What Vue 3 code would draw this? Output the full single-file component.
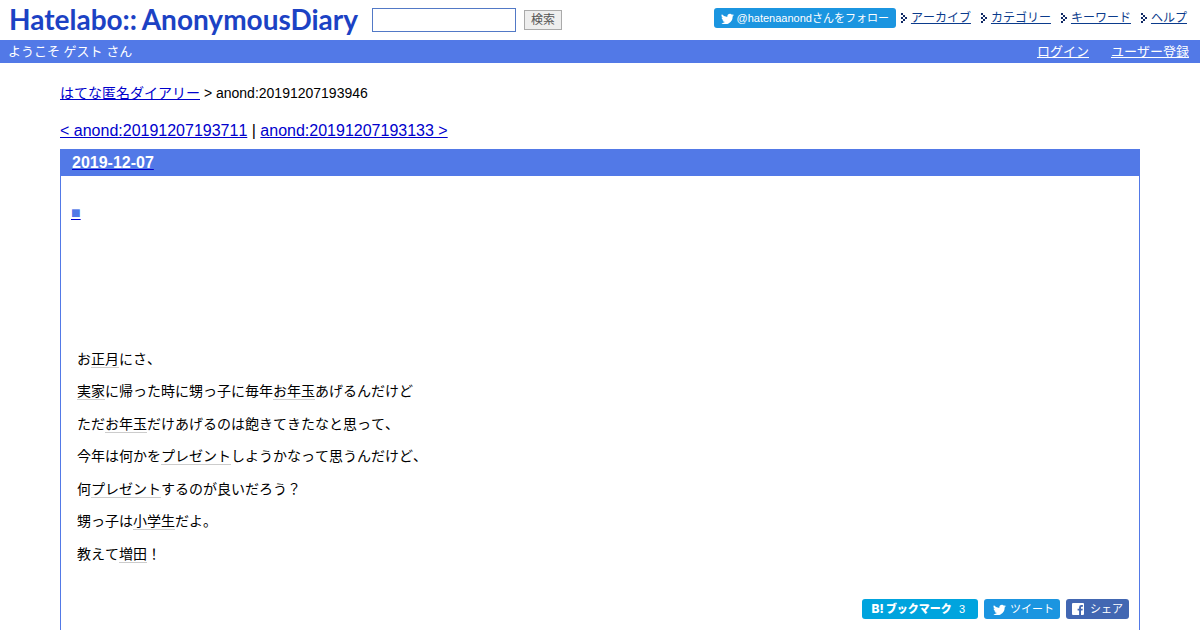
<script setup>
const menu = ['アーカイブ', 'カテゴリー', 'キーワード', 'ヘルプ']
const bird = 'M24 4.6a10 10 0 0 1-2.8.8 5 5 0 0 0 2.1-2.7 10 10 0 0 1-3.1 1.2 4.9 4.9 0 0 0-8.4 4.5A14 14 0 0 1 1.7 3.2a4.9 4.9 0 0 0 1.5 6.5 4.9 4.9 0 0 1-2.2-.6 4.9 4.9 0 0 0 3.9 4.9 5 5 0 0 1-2.2.1 4.9 4.9 0 0 0 4.6 3.4A9.9 9.9 0 0 1 0 19.5 14 14 0 0 0 21.5 7.1 10 10 0 0 0 24 4.6z'
const lines = [
  ['お', '*正月', 'にさ、'],
  ['*実家', 'に帰った時に甥っ子に毎年', '*お年玉', 'あげるんだけど'],
  ['ただ', '*お年玉', 'だけあげるのは飽きてきたなと思って、'],
  ['今年は何かを', '*プレゼント', 'しようかなって思うんだけど、'],
  ['何', '*プレゼント', 'するのが良いだろう？'],
  ['甥っ子は', '*小学生', 'だよ。'],
  ['教えて', '*増田', '！'],
]
</script>

<template>
  <div class="page">
    <header class="banner">
      <a href="#" class="logo"><span>Hatelabo::</span><span>AnonymousDiary</span></a>
      <form class="search" @submit.prevent>
        <input type="text" aria-label="検索語">
        <button type="submit">検索</button>
      </form>
      <nav class="menu">
        <a href="#" class="follow">
          <svg viewBox="0 1 24 20" width="13" height="11"><path :d="bird" fill="#fff" /></svg>
          <span>@hatenaanondさんをフォロー</span>
        </a>
        <a v-for="m in menu" :key="m" href="#" class="item">
          <svg viewBox="0 0 6 10" width="6" height="10" shape-rendering="crispEdges" fill="#102a66">
            <path d="M0 0h2v2H0zM2 2h2v2H2zM4 4h2v2H4zM2 6h2v2H2zM0 8h2v2H0zM0 4h2v2H0z" />
          </svg>
          <span>{{ m }}</span>
        </a>
      </nav>
    </header>
    <div class="status">
      <span>ようこそ ゲスト さん</span>
      <nav><a href="#">ログイン</a><a href="#">ユーザー登録</a></nav>
    </div>
    <main>
      <div class="crumbs"><a href="#">はてな匿名ダイアリー</a> &gt; anond:20191207193946</div>
      <div class="pager"><a href="#">&lt; anond:20191207193711</a> | <a href="#">anond:20191207193133 &gt;</a></div>
      <article>
        <h2><a href="#">2019-12-07</a></h2>
        <div class="entry">
          <h3><a href="#">■</a></h3>
          <div class="text">
            <p v-for="(line, i) in lines" :key="i">
              <template v-for="(s, j) in line" :key="j"><a v-if="s[0] === '*'" href="#">{{ s.slice(1) }}</a><template v-else>{{ s }}</template></template>
            </p>
          </div>
          <div class="share">
            <a href="#" class="hatena"><span class="mark">B!</span><b>ブックマーク</b><span class="count">3</span></a>
            <a href="#" class="tweet"><svg viewBox="0 1 24 20" width="13" height="11"><path :d="bird" fill="#fff" /></svg><span>ツイート</span></a>
            <a href="#" class="facebook">
              <svg viewBox="0 0 12 12" width="12" height="12"><path fill="#fff" fill-rule="evenodd" d="M1 0h10a1 1 0 0 1 1 1v10a1 1 0 0 1-1 1H9V7.5h1.5l.3-1.8H9V4.6q0-.8.9-.8h1V2.1H9.4Q7.1 2.1 7.1 4.3v1.4H5.6v1.8h1.5V12H1a1 1 0 0 1-1-1V1a1 1 0 0 1 1-1z" /></svg>
              <span>シェア</span>
            </a>
          </div>
        </div>
      </article>
    </main>
  </div>
</template>

<style>
body { margin: 0; background: #fff; }
</style>
<style scoped>
.page { min-height: 100vh; display: flex; flex-direction: column; font-family: "Liberation Sans", "Noto Sans CJK JP", sans-serif; font-kerning: none; color: #000; }
.banner { display: flex; height: 40px; padding: 0 13px 0 9px; align-items: flex-start; }
.logo { display: flex; justify-content: space-between; width: 349px; font: 700 28px/38px Lato, sans-serif; color: #1c42c4; text-decoration: none; }
.search { display: flex; align-items: center; gap: 8px; margin: 8px 0 0 14px; }
.search input { box-sizing: border-box; width: 144px; height: 24px; border: 1px solid #5279c6; padding: 2px; background: #fff; }
.search button { box-sizing: border-box; width: 38px; height: 20px; border: 1px solid #aaa; background: #eee; color: #555; padding: 0; font: 12px/16px "Liberation Sans", "Noto Sans CJK JP", sans-serif; }
.menu { display: flex; align-items: center; margin: 8px 0 0 auto; font-size: 12px; line-height: 20px; white-space: nowrap; }
.follow { display: flex; align-items: center; gap: 3px; height: 20px; padding: 0 7px; border-radius: 3px; background: #1b95e0; color: #fff; font-size: 11px; text-decoration: none; margin-right: 5px; }
.item { display: flex; align-items: center; gap: 4px; color: #0b3b8c; text-decoration: none; }
.item span { text-decoration: underline; }
.item + .item { margin-left: 10px; }
.status { display: flex; justify-content: space-between; padding: 0 11px 0 8px; background: #5279e7; color: #fff; font-size: 13px; line-height: 23px; }
.status nav { display: flex; gap: 22px; }
.status a { color: #fff; }
main { flex: 1; display: flex; flex-direction: column; padding: 20px 60px 0; }
.crumbs { font-size: 14px; line-height: 20px; }
.pager { font-size: 16px; line-height: 20px; margin: 18px 0 8px; }
.crumbs a, .pager a { color: #0000cc; }
article { flex: 1; border: 1px solid #5279e7; border-bottom: 0; }
h2 { margin: 0; padding: 0 11px; background: #5279e7; font-size: 16px; line-height: 26px; }
h2 a { color: #fff; text-decoration-color: #0000cc; }
.entry { padding: 27px 10px 11px; }
h3 { margin: 0; font-size: 16px; line-height: 20px; }
h3 a { color: #5279e7; text-decoration-color: #0000cc; }
.text { margin: 127px 6px 0; font-size: 14px; line-height: 1.32; }
.text p { margin: 0 0 14px; }
.text a { color: #000; text-decoration: none; border-bottom: 1px solid #ccc; }
.share { display: flex; justify-content: flex-end; gap: 6px; margin-top: 36px; font-size: 11px; line-height: 20px; }
.share a { display: flex; align-items: center; height: 20px; border-radius: 3px; color: #fff; text-decoration: none; }
.hatena { background: #00a4de; padding: 0 13px 0 10px; }
.mark { font: 800 12px/20px Inter, sans-serif; margin-right: 2px; }
.hatena b { font-weight: 900; font-size: 11px; }
.count { margin-left: 7px; }
.tweet { background: #1b95e0; padding: 0 6px 0 9px; gap: 4px; }
.facebook { background: #4267b2; padding: 0 6px; gap: 6px; }
</style>
